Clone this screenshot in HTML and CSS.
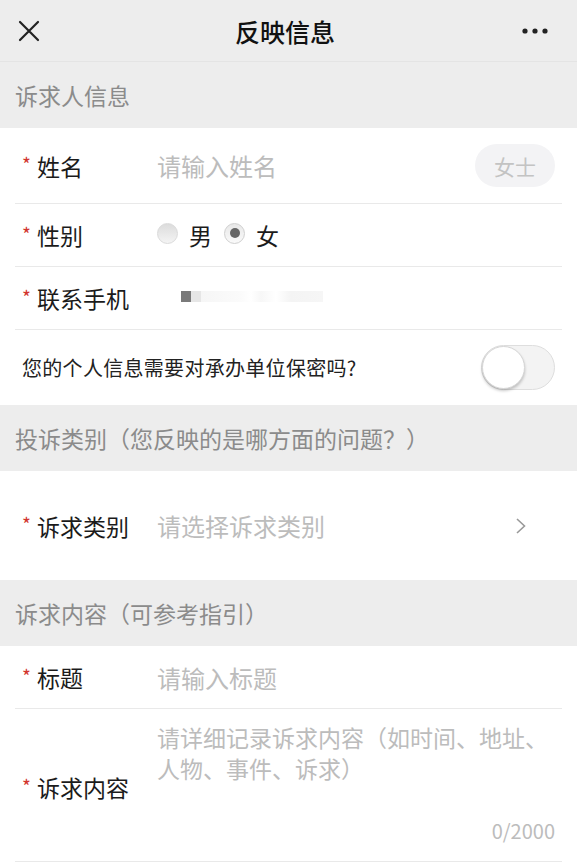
FILE: index.html
```html
<!DOCTYPE html>
<html lang="zh-CN">
<head>
  <meta charset="UTF-8">
  <meta name="viewport" content="width=device-width, initial-scale=1.0">
  <title>反映信息</title>
  <link rel="stylesheet" href="styles.css">
</head>
<body>
  <header class="topbar">
    <svg class="icon-close" width="22" height="22" viewBox="0 0 22 22">
      <path d="M2 2 L20 20 M20 2 L2 20" stroke="#222" stroke-width="2.2" stroke-linecap="round"/>
    </svg>
    <h1 class="title">反映信息</h1>
    <svg class="icon-more" width="26" height="6" viewBox="0 0 26 6">
      <circle cx="3" cy="3" r="2.6" fill="#222"/>
      <circle cx="13" cy="3" r="2.6" fill="#222"/>
      <circle cx="23" cy="3" r="2.6" fill="#222"/>
    </svg>
  </header>

  <div class="section-title">诉求人信息</div>
  <div class="group">
    <div class="row row-name">
      <span class="star">*</span>
      <span class="label">姓名</span>
      <span class="value placeholder">请输入姓名</span>
      <span class="pill">女士</span>
    </div>
    <div class="row">
      <span class="star">*</span>
      <span class="label">性别</span>
      <div class="value radios">
        <span class="radio"></span><span class="radio-text">男</span>
        <span class="radio checked"></span><span class="radio-text">女</span>
      </div>
    </div>
    <div class="row">
      <span class="star">*</span>
      <span class="label">联系手机</span>
      <span class="value"><span class="phone-blur"></span></span>
    </div>
    <div class="row row-privacy">
      <span class="privacy-text">您的个人信息需要对承办单位保密吗?</span>
      <span class="switch"><span class="knob"></span></span>
    </div>
  </div>

  <div class="section-title">投诉类别（您反映的是哪方面的问题？）</div>
  <div class="group">
    <div class="row row-type">
      <span class="star">*</span>
      <span class="label">诉求类别</span>
      <span class="value placeholder">请选择诉求类别</span>
      <svg class="chevron" width="12" height="18" viewBox="0 0 12 18">
        <path d="M2 2 L9.5 9 L2 16" fill="none" stroke="#999" stroke-width="1.6"/>
      </svg>
    </div>
  </div>

  <div class="section-title">诉求内容（可参考指引）</div>
  <div class="group">
    <div class="row">
      <span class="star">*</span>
      <span class="label">标题</span>
      <span class="value placeholder">请输入标题</span>
    </div>
    <div class="row row-content">
      <div class="label-box">
        <span class="star">*</span>
        <span class="label">诉求内容</span>
      </div>
      <div class="content-box">
        <p class="placeholder">请详细记录诉求内容（如时间、地址、人物、事件、诉求）</p>
        <span class="counter">0/2000</span>
      </div>
    </div>
  </div>
</body>
</html>
```

FILE: styles.css
```css
:root {
  --bg-grey: #ededed;
  --text: #1b1b1b;
  --muted: #8b8b8b;
  --placeholder: #bcbcbc;
  --line: #e9e9e9;
  --red: #d2352d;
}

* {
  margin: 0;
  padding: 0;
  box-sizing: border-box;
}

body {
  font-family: "Noto Sans CJK SC", "Noto Sans", sans-serif;
  background-color: #fff;
  color: var(--text);
  width: 577px;
  overflow: hidden;
}

.topbar {
  height: 62px;
  background-color: var(--bg-grey);
  border-bottom: 1px solid #e4e4e4;
  display: flex;
  align-items: center;
  justify-content: space-between;
  padding: 0 29px 0 18px;
}

.title {
  font-size: 25px;
  font-weight: 500;
  color: #111;
  margin-left: 8px;
}

.section-title {
  height: 66px;
  background-color: var(--bg-grey);
  display: flex;
  align-items: center;
  padding-left: 15px;
  font-size: 23px;
  color: var(--muted);
}

.group {
  background: #fff;
}

.row {
  margin: 0 15px;
  padding: 0 7px;
  height: 63px;
  display: flex;
  align-items: center;
  border-bottom: 1px solid var(--line);
  font-size: 23px;
}

.star {
  width: 15px;
  color: var(--red);
  font-size: 19px;
  align-self: center;
  margin-top: -4px;
}

.label {
  width: 120px;
}

.value {
  flex: 1;
}

.value.placeholder {
  font-size: 24px;
}

.placeholder {
  color: var(--placeholder);
}

.row-name {
  height: 76px;
}

.pill {
  width: 80px;
  height: 43px;
  border-radius: 22px;
  background-color: #f3f3f5;
  color: #c3c3c3;
  font-size: 21px;
  display: flex;
  align-items: center;
  justify-content: center;
}

.radios {
  display: flex;
  align-items: center;
}

.radio {
  width: 21px;
  height: 21px;
  border-radius: 50%;
  border: 1px solid #dadada;
  background: linear-gradient(#dcdcdc, #f4f4f4);
  display: flex;
  align-items: center;
  justify-content: center;
  margin-top: -4px;
}

.radio.checked {
  background: linear-gradient(#e8e8e8, #fafafa);
  border-color: #cfcfcf;
}

.radio.checked::after {
  content: "";
  width: 10px;
  height: 10px;
  border-radius: 50%;
  background: #666;
}

.radio-text {
  margin: 0 12px 0 11px;
}

.phone-blur {
  display: block;
  width: 142px;
  height: 11px;
  margin-left: 24px;
  margin-top: -4px;
  background: linear-gradient(to right,
    #7a7a7a 0, #7a7a7a 10px,
    #e6e6e6 10px, #e6e6e6 20px,
    #f6f6f6 20px, #fbfbfb 60px,
    #fff 70px, #f7f7f7 80px, #fff 95px,
    #f4f4f4 110px, #f6f6f6 142px);
}

.row-privacy {
  height: 75px;
  justify-content: space-between;
  border-bottom: none;
}

.privacy-text {
  font-size: 20px;
  letter-spacing: 0.3px;
  color: #222;
}

.switch {
  width: 74px;
  height: 45px;
  border-radius: 23px;
  border: 1px solid #dedede;
  background: #f3f3f3;
  display: flex;
  align-items: center;
}

.knob {
  width: 43px;
  height: 43px;
  border-radius: 50%;
  background: #fff;
  border: 1px solid #d6d6d6;
  box-shadow: 0 2px 3px rgba(0, 0, 0, 0.22);
}

.row-type {
  height: 109px;
  border-bottom: none;
}

.chevron {
  margin-right: 28px;
}

.row-content {
  height: 153px;
  align-items: stretch;
}

.label-box {
  display: flex;
  align-items: center;
  padding-top: 4px;
}

.content-box {
  flex: 1;
  display: flex;
  flex-direction: column;
  padding: 13px 0 16px;
}

.content-box p {
  line-height: 31px;
}

.counter {
  margin-top: auto;
  align-self: flex-end;
  font-size: 20px;
  color: var(--placeholder);
}
```
